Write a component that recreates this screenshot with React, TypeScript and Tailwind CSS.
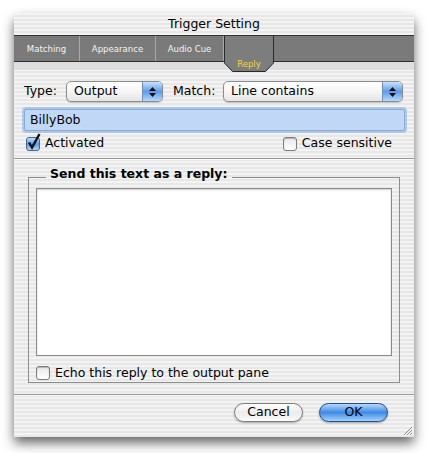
import React from 'react';

const stripes =
  'bg-[repeating-linear-gradient(180deg,#f3f3f3_0px,#f3f3f3_2px,#e7e7e7_2px,#e7e7e7_4px)]';

function PopupArrows() {
  return (
    <div className="flex h-full w-[20px] flex-col items-center justify-center gap-[2px] rounded-r-[4px] border-l border-[#6f8fb8] bg-gradient-to-b from-[#c9e1fb] via-[#5d9ce8] to-[#b5d8fb]">
      <svg width="7" height="4" viewBox="0 0 7 4">
        <path d="M3.5 0 L7 4 L0 4 Z" fill="#111" />
      </svg>
      <svg width="7" height="4" viewBox="0 0 7 4">
        <path d="M0 0 L7 0 L3.5 4 Z" fill="#111" />
      </svg>
    </div>
  );
}

function Popup({ label, width }: { label: string; width: string }) {
  return (
    <div
      className={`${width} flex h-[21px] items-center rounded-[5px] border border-[#8d8d8d] bg-gradient-to-b from-white via-[#f6f6f6] to-[#e4e4e4] shadow-[0_1px_1px_rgba(0,0,0,0.2)]`}
    >
      <span className="flex-1 pl-[7px] text-[12.5px] text-black">{label}</span>
      <PopupArrows />
    </div>
  );
}

function Checkbox({ checked }: { checked?: boolean }) {
  return (
    <div className="relative h-[14px] w-[14px]">
      <div
        className={
          checked
            ? 'h-[14px] w-[14px] rounded-[3px] border border-[#44658f] bg-gradient-to-b from-[#c2defb] via-[#5a99e6] to-[#b3d6fb]'
            : 'h-[14px] w-[14px] rounded-[3px] border border-[#7c7c7c] bg-gradient-to-b from-[#e9e9e9] to-white shadow-[inset_0_1px_1px_rgba(0,0,0,0.25)]'
        }
      />
      {checked && (
        <svg className="absolute -top-[4px] left-[1px]" width="14" height="17" viewBox="0 0 14 17">
          <path d="M2 9.5 L5 14.5 L12.5 1" stroke="#111" strokeWidth="2.4" fill="none" />
        </svg>
      )}
    </div>
  );
}

function Tab({ label, width }: { label: string; width: string }) {
  return (
    <div
      className={`${width} flex items-center justify-center border-r border-[#a9a9a9] pt-[1px] text-[9.5px] text-[#f4f4f4]`}
      style={{ fontFamily: '"DejaVu Sans Condensed", "DejaVu Sans", sans-serif', fontStretch: 'condensed' }}
    >
      {label}
    </div>
  );
}

export default function App() {
  return (
    <div
      className="h-[453px] w-[429px] overflow-hidden bg-white pl-[14px] pt-[13px] text-black"
      style={{ fontFamily: '"DejaVu Sans", "Liberation Sans", sans-serif' }}
    >
      <div
        className={`relative flex h-[424px] w-[400px] flex-col overflow-hidden rounded-t-[6px] shadow-[0_6px_12px_rgba(0,0,0,0.6)] ${stripes}`}
      >
        {/* title bar */}
        <div className="flex h-[23px] items-center justify-center border-b border-[#333] text-[12.5px]">
          Trigger Setting
        </div>

        {/* tabs */}
        <div className="flex h-[26px] border-b border-[#2e2e2e] bg-[#7a7a7a]">
          <Tab label="Matching" width="w-[66px]" />
          <Tab label="Appearance" width="w-[76px]" />
          <Tab label="Audio Cue" width="w-[68px]" />
          <div className="relative z-10 w-[49px]">
            <svg className="absolute left-0 top-0" width="50" height="36" viewBox="0 0 50 36">
              <path
                d="M0.5 0 L0.5 27 L8.5 35.5 L41.5 35.5 L49.5 27 L49.5 0"
                fill="#7d7d7d"
                stroke="#2a2a2a"
                strokeWidth="1"
              />
            </svg>
            <div
              className="absolute left-0 top-[21px] w-[50px] text-center text-[9.5px] text-[#f7d63b]"
              style={{ fontFamily: '"DejaVu Sans Condensed", "DejaVu Sans", sans-serif', fontStretch: 'condensed' }}
            >
              Reply
            </div>
          </div>
        </div>
        <div className="h-[9px] border-b border-[#f8f8f8] bg-[#dedede]" />

        {/* type / match row */}
        <div className="mt-[10px] flex items-center pl-[10px]">
          <span className="w-[42px] text-[12.5px]">Type:</span>
          <Popup label="Output" width="w-[97px]" />
          <span className="ml-[10px] w-[50px] text-[12.5px]">Match:</span>
          <Popup label="Line contains" width="w-[180px]" />
        </div>

        {/* text field */}
        <div className="ml-[10px] mt-[7px] flex h-[22px] w-[381px] items-center rounded-[2px] border border-[#86abd9] bg-[#c0d8f6] pl-[5px] text-[12.5px] shadow-[0_0_0_2px_rgba(130,170,225,0.55)]">
          BillyBob
        </div>

        {/* checkboxes */}
        <div className="mt-[5px] flex h-[15px] items-center justify-between pl-[12px] pr-[22px]">
          <div className="flex items-center gap-[5px]">
            <Checkbox checked />
            <span className="text-[12.5px]">Activated</span>
          </div>
          <div className="flex items-center gap-[5px]">
            <Checkbox />
            <span className="text-[12.5px]">Case sensitive</span>
          </div>
        </div>

        <div className="mt-[7px] h-[2px] border-t border-[#9a9a9a] bg-[#fafafa]" />

        {/* group */}
        <fieldset className="mx-[14px] mt-[6px] h-[217px] border border-[#8c8c8c] px-[7px] pb-[3px]">
          <legend className="ml-[10px] px-[4px] pb-[8px] text-[12.5px] font-bold leading-[15px]">
            Send this text as a reply:
          </legend>
          <div className="-mt-[1px] h-[168px] w-full border border-[#8a8a8a] bg-white shadow-[inset_0_1px_2px_rgba(0,0,0,0.2)]" />
          <div className="mt-[8px] flex items-center gap-[5px]">
            <Checkbox />
            <span className="text-[12.5px]">Echo this reply to the output pane</span>
          </div>
        </fieldset>

        <div className="mt-[11px] h-[2px] border-t border-[#9a9a9a] bg-[#fafafa]" />

        {/* buttons */}
        <div className="mt-[7px] flex justify-end gap-[16px] pr-[26px]">
          <button className="flex h-[19px] w-[69px] items-center justify-center rounded-full border border-[#7b7b7b] bg-gradient-to-b from-white via-[#ececec] to-[#fbfbfb] text-[12.5px] shadow-[0_1px_2px_rgba(0,0,0,0.3)]">
            Cancel
          </button>
          <button className="flex h-[19px] w-[69px] items-center justify-center rounded-full border border-[#24508e] bg-gradient-to-b from-[#b5d8fb] via-[#3d8ae6] to-[#a3d2fb] text-[12.5px] shadow-[0_1px_2px_rgba(0,0,0,0.35)]">
            OK
          </button>
        </div>

        {/* resize grip */}
        <svg className="absolute bottom-[1px] right-[1px]" width="11" height="11" viewBox="0 0 11 11">
          <path d="M10 2 L2 10 M10 5 L5 10 M10 8 L8 10" stroke="#8a8a8a" strokeWidth="1" />
          <path d="M10.8 2.8 L2.8 10.8 M10.8 5.8 L5.8 10.8" stroke="#fff" strokeWidth="0.8" />
        </svg>
      </div>
    </div>
  );
}
